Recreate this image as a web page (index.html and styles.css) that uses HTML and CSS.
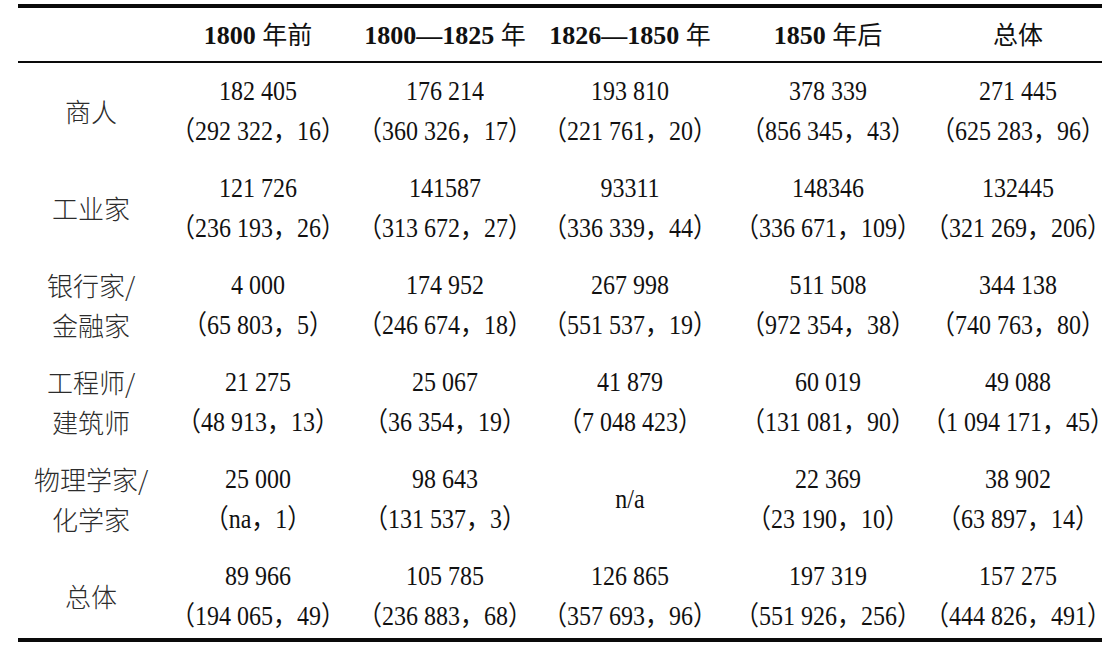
FILE: index.html
```html
<!DOCTYPE html>
<html lang="zh">
<head>
<meta charset="utf-8">
<title>表</title>
<link rel="stylesheet" href="styles.css">
</head>
<body>
<table class="data">
  <colgroup>
    <col class="c-label">
    <col class="c-1">
    <col class="c-2">
    <col class="c-3">
    <col class="c-4">
    <col class="c-5">
  </colgroup>
  <thead>
    <tr>
      <th></th>
      <th>1800 <span class="cj">年前</span></th>
      <th>1800—1825 <span class="cj">年</span></th>
      <th>1826—1850 <span class="cj">年</span></th>
      <th>1850 <span class="cj">年后</span></th>
      <th><span class="cj">总体</span></th>
    </tr>
  </thead>
  <tbody>
    <tr>
      <td class="label">商人</td>
      <td><span class="ln">182 405</span><span class="ln">（292 322，&ensp;16）</span></td>
      <td><span class="ln">176 214</span><span class="ln">（360 326，&ensp;17）</span></td>
      <td><span class="ln">193 810</span><span class="ln">（221 761，&ensp;20）</span></td>
      <td><span class="ln">378 339</span><span class="ln">（856 345，&ensp;43）</span></td>
      <td><span class="ln">271 445</span><span class="ln">（625 283，&ensp;96）</span></td>
    </tr>
    <tr>
      <td class="label">工业家</td>
      <td><span class="ln">121 726</span><span class="ln">（236 193，&ensp;26）</span></td>
      <td><span class="ln">141587</span><span class="ln">（313 672，&ensp;27）</span></td>
      <td><span class="ln">93311</span><span class="ln">（336 339，&ensp;44）</span></td>
      <td><span class="ln">148346</span><span class="ln">（336 671，&ensp;109）</span></td>
      <td><span class="ln">132445</span><span class="ln">（321 269，&ensp;206）</span></td>
    </tr>
    <tr>
      <td class="label"><span class="lb">银行家/</span><span class="lb">金融家</span></td>
      <td><span class="ln">4 000</span><span class="ln">（65 803，&ensp;5）</span></td>
      <td><span class="ln">174 952</span><span class="ln">（246 674，&ensp;18）</span></td>
      <td><span class="ln">267 998</span><span class="ln">（551 537，&ensp;19）</span></td>
      <td><span class="ln">511 508</span><span class="ln">（972 354，&ensp;38）</span></td>
      <td><span class="ln">344 138</span><span class="ln">（740 763，&ensp;80）</span></td>
    </tr>
    <tr>
      <td class="label"><span class="lb">工程师/</span><span class="lb">建筑师</span></td>
      <td><span class="ln">21 275</span><span class="ln">（48 913，&ensp;13）</span></td>
      <td><span class="ln">25 067</span><span class="ln">（36 354，&ensp;19）</span></td>
      <td><span class="ln">41 879</span><span class="ln">（7 048 423）</span></td>
      <td><span class="ln">60 019</span><span class="ln">（131 081，&ensp;90）</span></td>
      <td><span class="ln">49 088</span><span class="ln">（1 094 171，&ensp;45）</span></td>
    </tr>
    <tr>
      <td class="label"><span class="lb">物理学家/</span><span class="lb">化学家</span></td>
      <td><span class="ln">25 000</span><span class="ln">（na，&ensp;1）</span></td>
      <td><span class="ln">98 643</span><span class="ln">（131 537，&ensp;3）</span></td>
      <td><span class="ln">n/a</span></td>
      <td><span class="ln">22 369</span><span class="ln">（23 190，&ensp;10）</span></td>
      <td><span class="ln">38 902</span><span class="ln">（63 897，&ensp;14）</span></td>
    </tr>
    <tr class="last">
      <td class="label">总体</td>
      <td><span class="ln">89 966</span><span class="ln">（194 065，&ensp;49）</span></td>
      <td><span class="ln">105 785</span><span class="ln">（236 883，&ensp;68）</span></td>
      <td><span class="ln">126 865</span><span class="ln">（357 693，&ensp;96）</span></td>
      <td><span class="ln">197 319</span><span class="ln">（551 926，&ensp;256）</span></td>
      <td><span class="ln">157 275</span><span class="ln">（444 826，&ensp;491）</span></td>
    </tr>
  </tbody>
</table>
</body>
</html>
```

FILE: styles.css
```css
html, body {
  margin: 0;
  padding: 0;
  background: #ffffff;
}

body {
  font-family: "Liberation Serif", "Noto Sans CJK SC", serif;
  color: #111111;
}

.data {
  margin: 4px 0 0 18px;
  width: 1084px;
  table-layout: fixed;
  border-collapse: separate;
  border-spacing: 0;
}

.c-label { width: 146px; }
.c-1 { width: 188px; }
.c-2 { width: 186px; }
.c-3 { width: 184px; }
.c-4 { width: 212px; }
.c-5 { width: 168px; }

.data th {
  height: 53px;
  padding: 0;
  border-top: 4px solid #0a0a0a;
  border-bottom: 2px solid #0a0a0a;
  font-size: 26px;
  font-weight: bold;
  text-align: center;
  vertical-align: middle;
  white-space: nowrap;
  line-height: 30px;
}

.data th .cj {
  font-family: "Noto Sans CJK SC", sans-serif;
  font-weight: normal;
  font-size: 25px;
}

.data td {
  padding: 8px 0 9px;
  font-size: 24px;
  line-height: 40px;
  text-align: center;
  vertical-align: middle;
  white-space: nowrap;
}

.ln {
  display: block;
  font-feature-settings: "halt";
  transform: scaleY(1.12);
}

.data td.label {
  font-family: "Noto Sans CJK SC", sans-serif;
  font-weight: 300;
  font-size: 26px;
  color: #2c2c2c;
}

.lb {
  display: block;
}

.data tr.last td {
  padding-bottom: 2px;
  border-bottom: 4px solid #0a0a0a;
}
```
